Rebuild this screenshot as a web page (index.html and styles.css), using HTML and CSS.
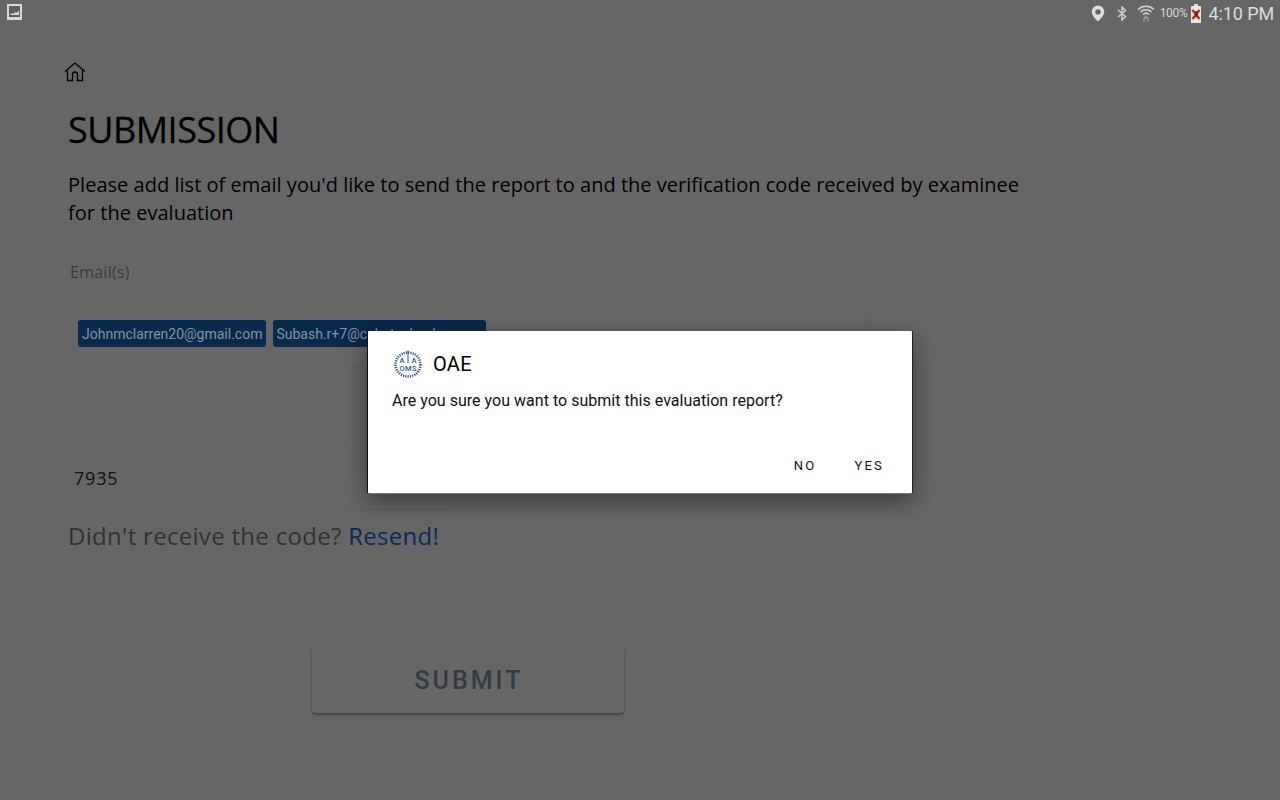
FILE: index.html
```html
<!DOCTYPE html>
<html lang="en">
<head>
<meta charset="utf-8">
<title>OAE Submission</title>
<link rel="stylesheet" href="styles.css">
</head>
<body>
<header class="status-bar">
  <svg class="gallery-icon" width="15" height="16" viewBox="0 0 15 16" aria-hidden="true">
    <rect x="0" y="0" width="15" height="16" fill="#d8d8d8"/>
    <rect x="2" y="2" width="11" height="11" fill="#5e5e5e"/>
    <path d="M3 11 L5 9 L6.500 10 L8 8 L9.500 9 L12 6.500 L12 11 Z" fill="#d8d8d8"/>
  </svg>
  <div class="status-right">
    <svg width="14" height="17" viewBox="0 0 14 17" aria-hidden="true"><path fill-rule="evenodd" d="M7 0.500a6.300 6.300 0 0 0-6.300 6.300C0.700 11 7 16.500 7 16.500S13.300 11 13.300 6.800A6.300 6.300 0 0 0 7 0.500ZM7 4.200a2.700 2.700 0 1 1 0 5.400a2.700 2.700 0 0 1 0-5.400Z" fill="#dedede"/></svg>
    <svg class="bt" width="10" height="15" viewBox="0 0 10 15" aria-hidden="true"><path d="M1 4 L8.500 10.500 L5 14 L5 1 L8.500 4.500 L1 11" fill="none" stroke="#d0d0d0" stroke-width="1.500"/></svg>
    <svg class="wifi" width="18" height="19" viewBox="0 0 18 19" aria-hidden="true">
      <path d="M1 5.500 A11.500 11.500 0 0 1 17 5.500 M3.500 8 A8 8 0 0 1 14.500 8 M6 10.500 A4.500 4.500 0 0 1 12 10.500" fill="none" stroke="#d4d4d4" stroke-width="1.600"/>
      <path d="M9 12 L7.500 14 H11 Z M7 14 V18 M11 14 V18" fill="none" stroke="#999" stroke-width="1.300"/>
    </svg>
    <span class="battery-pct">100%</span>
    <svg class="battery" width="12" height="19" viewBox="0 0 12 19" aria-hidden="true">
      <rect x="4" y="0" width="4" height="2" fill="#dedede"/>
      <rect x="1" y="2" width="10" height="17" fill="#e6e6e6"/>
      <path d="M2.500 6 L9.500 15 M9.500 6 L2.500 15" stroke="#cc1f14" stroke-width="2.200"/>
      <path d="M5 8 H7.500 L6 10.500 H7.500 L5 13.500" stroke="#222" stroke-width="1" fill="none"/>
    </svg>
    <span class="clock">4:10 PM</span>
  </div>
</header>

<main class="page">
  <svg class="home-icon" width="22" height="20" viewBox="0 0 22 20" aria-hidden="true">
    <path d="M1 9.500 L11 1 L21 9.500 M3.500 8 V18.500 H8.500 V12.500 A2.500 2.500 0 0 1 13.500 12.500 V18.500 H18.500 V8" fill="none" stroke="#000" stroke-width="1.300"/>
  </svg>
  <h1 class="title">SUBMISSION</h1>
  <p class="intro">Please add list of email you'd like to send the report to and the verification code received by examinee for the evaluation</p>
  <label class="field-label">Email(s)</label>
  <div class="email-box">
    <span class="chip">Johnmclarren20@gmail.com</span>
    <span class="chip chip-long">Subash.r+7@cubetechsolns.com</span>
  </div>
  <div class="code-box">7935</div>
  <p class="resend">Didn't receive the code? <a class="resend-link">Resend!</a></p>
  <div class="submit-row"><button class="submit">SUBMIT</button></div>
</main>

<section class="dialog" role="dialog">
  <div class="dialog-head">
    <svg class="logo" width="30" height="28" viewBox="0 0 30 28" aria-hidden="true">
      <ellipse cx="15" cy="14.500" rx="12.500" ry="12" fill="none" stroke="#2f4f9a" stroke-width="2.600" stroke-dasharray="1.200 1.100"/>
      <path d="M15 0.500 V13" stroke="#2f4f9a" stroke-width="1"/>
      <text class="logo-text" x="15" y="13" textLength="17">A A</text>
      <text class="logo-text" x="15" y="21" textLength="17">OMS</text>
    </svg>
    <span class="dialog-title">OAE</span>
  </div>
  <p class="dialog-msg">Are you sure you want to submit this evaluation report?</p>
  <div class="dialog-actions">
    <button class="dialog-btn">NO</button>
    <button class="dialog-btn">YES</button>
  </div>
</section>
</body>
</html>
```

FILE: styles.css
```css
* { box-sizing: border-box; }
html, body { margin: 0; height: 100%; overflow: hidden; }
body {
  background: #666666;
  color: #000;
  font-family: "Open Sans", "Noto Sans", sans-serif;
  width: 1280px;
  height: 800px;
  position: relative;
}
.status-bar {
  height: 26px;
  padding: 3px 6px 0 7px;
  display: flex;
  justify-content: space-between;
  align-items: flex-start;
}
.gallery-icon { display: block; margin-top: 1px; }
.status-right { display: flex; align-items: center; height: 20px; }
.bt { margin-left: 12px; }
.wifi { margin-left: 10px; }
.battery-pct {
  font: 12px "Roboto", sans-serif;
  color: #d4d4d4;
  margin-left: 5px;
  letter-spacing: -0.3px;
}
.battery { margin-left: 3px; }
.clock {
  font: 18px "Roboto", sans-serif;
  color: #dcdcdc;
  margin-left: 6px;
  letter-spacing: -0.1px;
}
.page { padding: 36px 0 0 64px; width: 1000px; }
.home-icon { display: block; }
.title {
  margin: 23px 0 0 4px;
  font-size: 36px;
  font-weight: 400;
  line-height: 50px;
  letter-spacing: -0.5px;
  -webkit-text-stroke: 0.3px #000;
}
.intro {
  margin: 16px 0 0 4px;
  font-size: 20px;
  line-height: 28px;
  width: 960px;
  letter-spacing: 0.025px;
}
.field-label {
  display: block;
  margin: 33px 0 0 6px;
  font-size: 16px;
  line-height: 24px;
  letter-spacing: 0.25px;
  color: #3c3c3c;
}
.email-box {
  margin: 18px 0 0 2px;
  width: 805px;
  height: 65px;
  border: 1px solid #606060;
  border-radius: 5px;
  padding: 17px 11px;
  display: flex;
  gap: 7px;
  align-items: flex-start;
}
.chip {
  background: #082a4d;
  color: #87939e;
  font: 14px/29px "Roboto", sans-serif;
  height: 27px;
  padding: 0 4px;
  border-radius: 3px;
  white-space: nowrap;
}
.chip-long { padding: 0 4px 0 3px; }
.code-box {
  margin: 78px 0 0 2px;
  width: 389px;
  height: 65px;
  border: 1px solid #606060;
  border-radius: 5px;
  padding: 0 7px;
  font-size: 18px;
  line-height: 65px;
  letter-spacing: 0.8px;
  color: #111;
}
.resend {
  margin: 9px 0 0 4px;
  font-size: 24px;
  line-height: 34px;
  letter-spacing: 0.3px;
  color: #333;
}
.resend-link { color: #0b2a58; }
.submit-row { margin: 94px 0 0 248px; }
.submit {
  width: 312px;
  height: 66px;
  padding: 0 0 0 2px;
  background: #666;
  border: 0;
  border-radius: 4px;
  box-shadow: 0 2px 3px rgba(0,0,0,.35);
  font: 500 25px "Roboto", sans-serif;
  letter-spacing: 3px;
  color: #333b44;
}
.dialog {
  position: absolute;
  left: 368px;
  top: 331px;
  width: 544px;
  height: 162px;
  background: #fff;
  border-radius: 1px;
  box-shadow: -1px 0 0 #111, 1px 0 0 #222, 0 1px 0 #777, 0 8px 24px rgba(0,0,0,.45);
  padding: 18px 24px 0;
}
.dialog-head { display: flex; align-items: center; gap: 10px; height: 30px; }
.logo { display: block; margin-left: 1px; }
.logo-text { font: 500 7.500px "Roboto", sans-serif; fill: #2f4f9a; text-anchor: middle; }
.dialog-title { font: 400 20px "Roboto", sans-serif; letter-spacing: 0.3px; }
.dialog-msg {
  margin: 10px 0 0;
  font: 16px/24px "Roboto", sans-serif;
  letter-spacing: 0.02px;
  color: #111;
}
.dialog-actions {
  margin-top: 41px;
  display: flex;
  justify-content: flex-end;
  gap: 38px;
  padding-right: 4px;
}
.dialog-btn {
  background: none;
  border: 0;
  padding: 0;
  font: 400 13px/24px "Roboto", sans-serif;
  letter-spacing: 2.200px;
  color: #111;
}
```
